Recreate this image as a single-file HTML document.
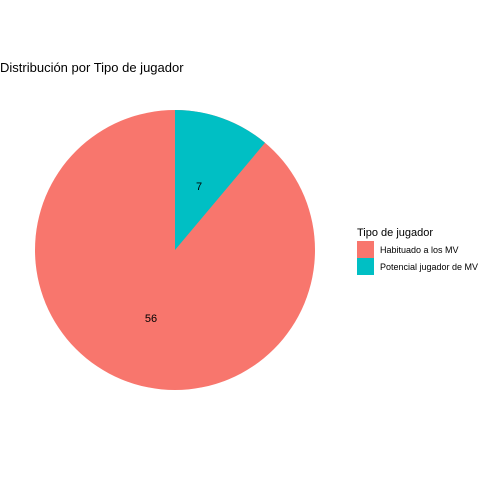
<!DOCTYPE html>
<html><head><style>
body{margin:0;width:480px;height:480px;background:#fff;overflow:hidden;font-family:"Liberation Sans",sans-serif;}
</style></head><body>
<svg width="480" height="480" xmlns="http://www.w3.org/2000/svg" style="position:absolute;left:0;top:0">
<rect width="480" height="480" fill="#fff"/>
<text x="0" y="72" font-size="13" fill="#000" font-family="Liberation Sans, sans-serif">Distribución por Tipo de jugador</text>
<circle cx="175" cy="250" r="140" fill="#F8766D"/>
<path d="M175,250 L175,110 A140,140 0 0 1 265,142.8 Z" fill="#00BFC4"/>
<text x="199" y="190" font-size="11" text-anchor="middle" fill="#000" font-family="Liberation Sans, sans-serif">7</text>
<text x="151" y="322" font-size="11" text-anchor="middle" fill="#000" font-family="Liberation Sans, sans-serif">56</text>
<text x="357" y="236" font-size="11" fill="#000" font-family="Liberation Sans, sans-serif">Tipo de jugador</text>
<rect x="357" y="241" width="17" height="17" fill="#F8766D"/>
<rect x="357" y="258" width="17" height="17" fill="#00BFC4"/>
<text x="380" y="253" font-size="9" fill="#000" font-family="Liberation Sans, sans-serif">Habituado a los MV</text>
<text x="380" y="270" font-size="9" fill="#000" font-family="Liberation Sans, sans-serif">Potencial jugador de MV</text>
</svg>
</body></html>
